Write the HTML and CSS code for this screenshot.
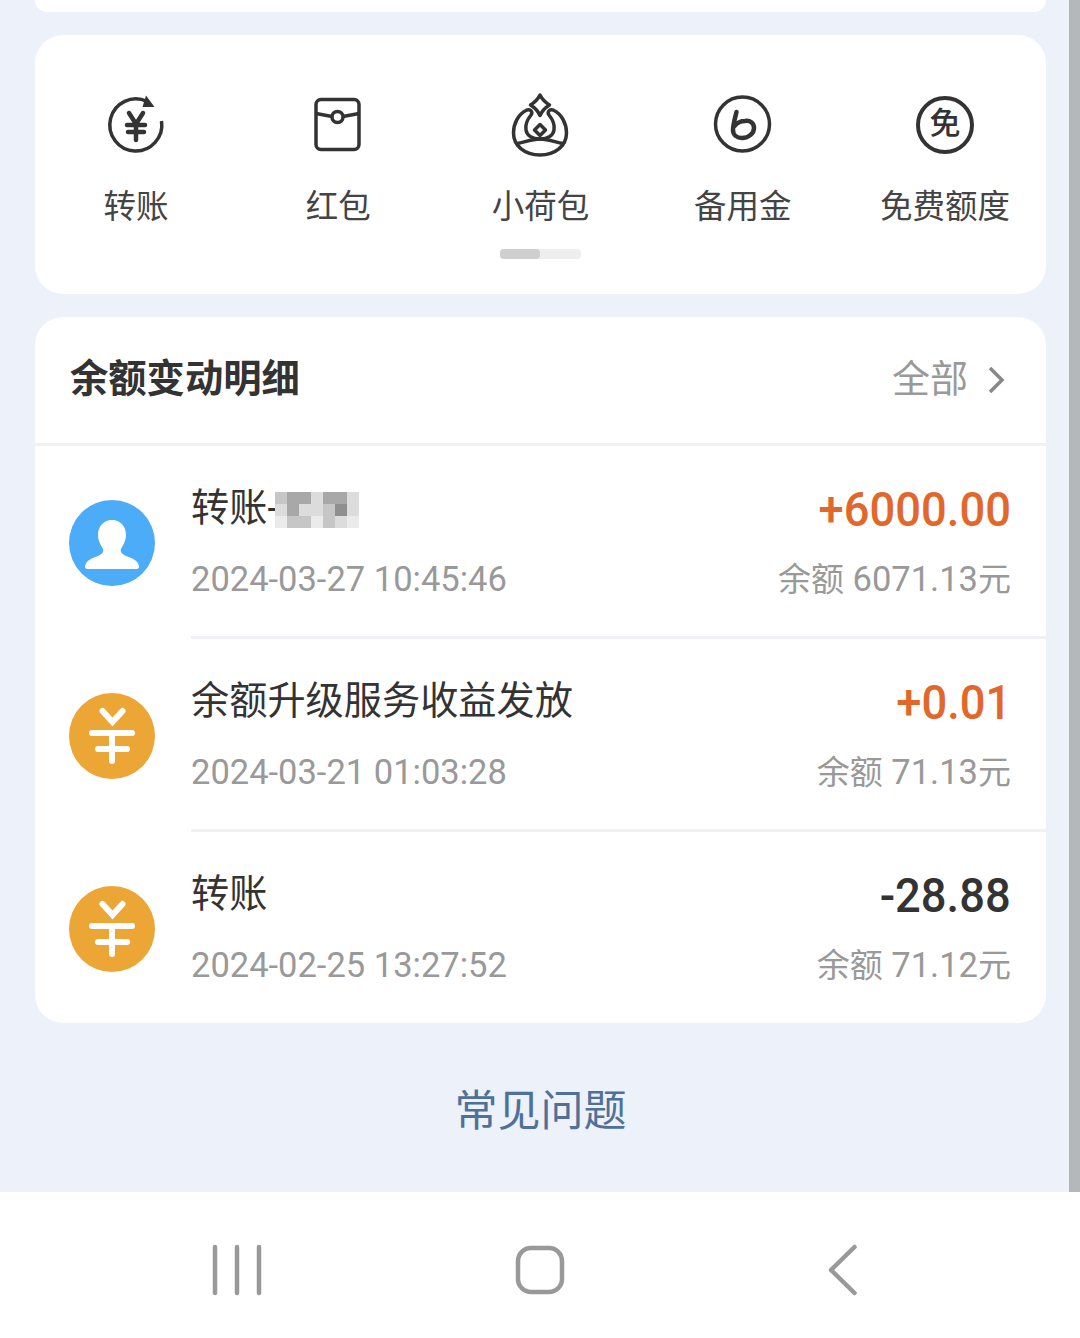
FILE: index.html
```html
<!DOCTYPE html>
<html lang="zh-CN">
<head>
    <meta charset="UTF-8">
    <meta name="viewport" content="width=device-width, initial-scale=1.0">
    <title>余额</title>
    <link rel="stylesheet" href="styles.css">
</head>
<body>
    <div class="screen">
        <main class="content">
            <div class="card card-top"></div>

            <section class="card shortcuts">
                <div class="shortcut-grid">
                    <div class="shortcut">
                        <svg class="shortcut-icon" viewBox="0 0 60 60">
                            <path d="M41 6.500A26 26 0 1 0 55.500 26"/>
                            <path class="fill" d="M40 0.500l8.500 11.500-12 0z"/>
                            <path class="thick" d="M23 18l7 11 7-11M21 30h18M22 37h16M30 29v16"/>
                        </svg>
                        <span>转账</span>
                    </div>
                    <div class="shortcut">
                        <svg class="shortcut-icon" viewBox="0 0 60 60">
                            <rect x="8" y="4.500" width="43" height="50" rx="5"/>
                            <path d="M8 18.500l16 3M51 18.500l-16 3"/>
                            <circle cx="29.500" cy="22" r="5.500"/>
                        </svg>
                        <span>红包</span>
                    </div>
                    <div class="shortcut">
                        <svg class="shortcut-icon" viewBox="0 0 60 60">
                            <path d="M30 0C32 4 35.500 7.500 39.500 10 35.500 12.500 32 16 30 20.500 28 16 24.500 12.500 20.500 10 24.500 7.500 28 4 30 0z"/>
                            <path d="M17 15C8 19 3.500 29 3.500 38 3.500 51 15 60 30 60S56.500 51 56.500 38C56.500 29 52 19 43 15 39 14 37 17 39 20 43 25 45 30 44 35 43 41 37 44 30 44S17 41 16 35C15 30 17 25 21 20 23 17 21 14 17 15z"/>
                            <path d="M7 48.500C14 47.500 21 44 30 44S46 47.500 53 48.500"/>
                            <path d="M30 29.500l5.500 5.500-5.500 5.500-5.500-5.500z"/>
                        </svg>
                        <span>小荷包</span>
                    </div>
                    <div class="shortcut">
                        <svg class="shortcut-icon" viewBox="0 0 60 60">
                            <circle cx="29.500" cy="29" r="27"/>
                            <path class="thick" d="M23.500 17C22 23 20 30 20 35 20 40 24 43 29 43 36 43 41 38 41 33 41 28 37 25 32 26 28 26 24 28 21.500 31"/>
                        </svg>
                        <span>备用金</span>
                    </div>
                    <div class="shortcut">
                        <div class="badge-icon">免</div>
                        <span>免费额度</span>
                    </div>
                </div>
                <div class="scrollbar"><div class="scrollbar-thumb"></div></div>
            </section>

            <section class="card details">
                <header class="details-head">
                    <h2>余额变动明细</h2>
                    <div class="details-all">
                        全部
                        <svg class="chevron" viewBox="0 0 18 30"><path d="M3 3l12 12L3 27"/></svg>
                    </div>
                </header>

                <div class="row">
                    <div class="avatar avatar-blue">
                        <svg viewBox="0 0 86 86">
                            <path d="M43 20c-9 0-14 7-14 15 0 6 3 10 5 14 1 3-1 5-5 7-5 2-12 4-13 10-.4 2 .6 3 3 3h48c2.400 0 3.400-1 3-3-1-6-8-8-13-10-4-2-6-4-5-7 2-4 5-8 5-14 0-8-5-15-14-15z"/>
                        </svg>
                    </div>
                    <div class="row-body">
                        <div class="row-main">
                            <div class="row-title">转账-<span class="mosaic"><i class="m2"></i><i class="m1"></i><i class="m1"></i><i class="m3"></i><i class="m1"></i><i class="m1"></i><i class="m3"></i><i class="m3"></i><i class="m1"></i><i class="m3"></i><i class="m3"></i><i class="m2"></i><i class="m0"></i><i class="m3"></i><i class="m4"></i><i class="m2"></i><i class="m2"></i><i class="m4"></i><i class="m2"></i><i class="m3"></i><i class="m4"></i></span></div>
                            <div class="row-amount plus">+6000.00</div>
                        </div>
                        <div class="row-sub">
                            <div>2024-03-27 10:45:46</div>
                            <div><span class="cn">余额</span> 6071.13<span class="cn">元</span></div>
                        </div>
                    </div>
                </div>

                <div class="row">
                    <div class="avatar avatar-orange">
                        <svg viewBox="0 0 86 86"><path d="M33.500 18l10 11 10-11M23 40h40M29 56h29M43 40v28"/></svg>
                    </div>
                    <div class="row-body">
                        <div class="row-main">
                            <div class="row-title">余额升级服务收益发放</div>
                            <div class="row-amount plus">+0.01</div>
                        </div>
                        <div class="row-sub">
                            <div>2024-03-21 01:03:28</div>
                            <div><span class="cn">余额</span> 71.13<span class="cn">元</span></div>
                        </div>
                    </div>
                </div>

                <div class="row">
                    <div class="avatar avatar-orange">
                        <svg viewBox="0 0 86 86"><path d="M33.500 18l10 11 10-11M23 40h40M29 56h29M43 40v28"/></svg>
                    </div>
                    <div class="row-body">
                        <div class="row-main">
                            <div class="row-title">转账</div>
                            <div class="row-amount">-28.88</div>
                        </div>
                        <div class="row-sub">
                            <div>2024-02-25 13:27:52</div>
                            <div><span class="cn">余额</span> 71.12<span class="cn">元</span></div>
                        </div>
                    </div>
                </div>
            </section>

            <a class="faq">常见问题</a>
        </main>

        <nav class="navbar">
            <svg class="nav-icon" viewBox="0 0 60 60"><path d="M8 7v46M30 7v46M52 7v46"/></svg>
            <svg class="nav-icon" viewBox="0 0 60 60"><rect x="8" y="8" width="44" height="44" rx="13"/></svg>
            <svg class="nav-icon" viewBox="0 0 60 60"><path d="M42.500 7L19 30l23.500 23"/></svg>
        </nav>
    </div>
</body>
</html>
```

FILE: styles.css
```css
* {
    box-sizing: border-box;
}
body {
    margin: 0;
    font-family: Roboto, "Noto Sans CJK SC", sans-serif;
    background: #fff;
}
.screen {
    width: 1080px;
    height: 1338px;
    display: flex;
    flex-direction: column;
    overflow: hidden;
}
.content {
    height: 1192px;
    padding: 0 23px 0 35px;
    background: #edf1fa;
    border-right: 11px solid #b4b8ba;
    display: flex;
    flex-direction: column;
}
.card {
    background: #fff;
    border-radius: 28px;
}
.card-top {
    height: 12px;
    border-radius: 0 0 28px 28px;
}

/* shortcuts */
.shortcuts {
    margin-top: 23px;
    height: 259px;
    padding-top: 60px;
    display: flex;
    flex-direction: column;
    align-items: center;
}
.shortcut-grid {
    width: 100%;
    display: grid;
    grid-template-columns: repeat(5, 1fr);
}
.shortcut {
    display: flex;
    flex-direction: column;
    align-items: center;
    font-size: 32.500px;
    line-height: 46px;
    color: #444;
}
.shortcut-icon {
    width: 60px;
    height: 60px;
    margin-bottom: 29px;
    overflow: visible;
    fill: none;
    stroke: #333;
    stroke-width: 3.500;
    stroke-linejoin: round;
}
.shortcut-icon .fill {
    fill: #333;
    stroke: none;
}
.shortcut-icon .thick {
    stroke-width: 4.500;
    stroke-linecap: round;
}
.badge-icon {
    width: 58px;
    height: 58px;
    margin: 1px 0 30px;
    border: 4px solid #333;
    border-radius: 50%;
    font-size: 31px;
    font-weight: 500;
    line-height: 48px;
    text-align: center;
    color: #333;
}
.scrollbar {
    width: 81px;
    height: 10px;
    margin-top: 19px;
    border-radius: 4px;
    background: #eeeeee;
}
.scrollbar-thumb {
    width: 40px;
    height: 10px;
    border-radius: 4px;
    background: #cfcfcf;
}

/* details */
.details {
    margin-top: 23px;
    height: 706px;
}
.details-head {
    height: 129px;
    padding: 0 41px 9px 35px;
    border-bottom: 3px solid #f0f1f4;
    display: flex;
    justify-content: space-between;
    align-items: center;
}
.details-head h2 {
    margin: 0;
    font-size: 38.300px;
    font-weight: 700;
    color: #333;
}
.details-all {
    display: flex;
    align-items: center;
    gap: 19px;
    font-size: 38px;
    color: #999;
}
.chevron {
    width: 18px;
    height: 30px;
    margin-top: 8px;
    fill: none;
    stroke: #888;
    stroke-width: 3.500;
}
.row {
    height: 193px;
    padding-left: 34px;
    display: flex;
    align-items: center;
}
.avatar {
    width: 86px;
    height: 86px;
    flex: none;
    border-radius: 50%;
}
.avatar svg {
    display: block;
}
.avatar-blue {
    background: #4dacf7;
    fill: #fff;
}
.avatar-orange {
    background: #eca636;
    fill: none;
    stroke: #fff;
    stroke-width: 6;
    stroke-linecap: round;
}
.row-body {
    flex: 1;
    height: 193px;
    margin-left: 36px;
    padding: 28px 35px 0 0;
    border-bottom: 3px solid #f0f1f4;
}
.row:last-child .row-body {
    border-bottom: 0;
}
.row-main {
    height: 60px;
    display: flex;
    justify-content: space-between;
    align-items: center;
}
.row-title {
    display: flex;
    align-items: center;
    font-size: 38.200px;
    color: #333;
}
/* the amounts are in a narrow face, Roboto squeezed a bit comes closest */
.row-amount {
    margin-top: 11px;
    font-size: 49px;
    font-weight: 500;
    color: #333;
    transform: scaleX(0.925);
    transform-origin: right center;
}
.row-amount.plus {
    color: #e2672b;
}
.row-sub {
    margin-top: 22px;
    display: flex;
    justify-content: space-between;
    font-size: 34.500px;
    line-height: 46px;
    color: #999;
}
.row-sub .cn {
    font-size: 33px;
}
.mosaic {
    display: inline-grid;
    grid-template-columns: repeat(7, 12px);
    grid-auto-rows: 12px;
    margin-left: -3px;
    margin-top: 11px;
}
.m0 { background: #8f8f8f; }
.m1 { background: #a8a8a8; }
.m2 { background: #c6c6c6; }
.m3 { background: #dcdcdc; }
.m4 { background: #ebebeb; }

.faq {
    margin-top: 58px;
    text-align: center;
    font-size: 43px;
    line-height: 60px;
    color: #4f7199;
}

/* bottom navigation */
.navbar {
    flex: 1;
    background: #fff;
    padding: 48px 208px 0 207px;
    display: flex;
    justify-content: space-between;
    align-items: flex-start;
}
.nav-icon {
    width: 60px;
    height: 60px;
    fill: none;
    stroke: #999;
    stroke-width: 4.500;
    stroke-linecap: round;
    stroke-linejoin: round;
}
```
